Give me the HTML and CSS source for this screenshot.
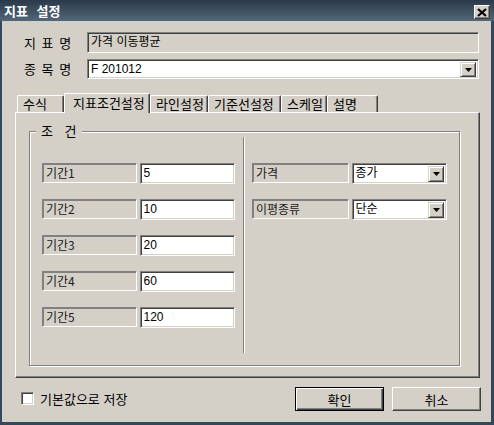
FILE: index.html
```html
<!DOCTYPE html>
<html lang="ko">
<head>
    <meta charset="UTF-8">
    <title>지표 설정</title>
    <link rel="stylesheet" href="styles.css">
</head>
<body>
    <div class="window">
        <div class="titlebar">
            <span class="title">지표 설정</span>
            <span class="close-btn">
                <svg width="10" height="9" viewBox="0 0 10 9">
                    <path d="M1 1 L9 8 M9 1 L1 8" stroke="#000" stroke-width="2.2" fill="none"/>
                </svg>
            </span>
        </div>

        <div class="client">
            <div class="field-row first">
                <span class="field-label">지 표 명</span>
                <div class="textbox readonly">가격 이동평균</div>
            </div>
            <div class="field-row second">
                <span class="field-label">종 목 명</span>
                <div class="combo">
                    <span class="combo-text">F 201012</span>
                    <span class="drop-btn"><svg width="7" height="4" viewBox="0 0 7 4"><polygon points="0,0 7,0 3.5,4" fill="#000"/></svg></span>
                </div>
            </div>

            <div class="tabs">
                <div class="tab t1">수식</div>
                <div class="tab t2 active">지표조건설정</div>
                <div class="tab t3">라인설정</div>
                <div class="tab t4">기준선설정</div>
                <div class="tab t5">스케일</div>
                <div class="tab t6">설명</div>
            </div>

            <div class="tab-panel">
                <div class="group">
                    <div class="group-title">조 건</div>
                    <div class="group-body">
                        <div class="col col-left">
                            <div class="cond-row">
                                <div class="static">기간1</div>
                                <div class="textbox">5</div>
                            </div>
                            <div class="cond-row">
                                <div class="static">기간2</div>
                                <div class="textbox">10</div>
                            </div>
                            <div class="cond-row">
                                <div class="static">기간3</div>
                                <div class="textbox">20</div>
                            </div>
                            <div class="cond-row">
                                <div class="static">기간4</div>
                                <div class="textbox">60</div>
                            </div>
                            <div class="cond-row">
                                <div class="static">기간5</div>
                                <div class="textbox">120</div>
                            </div>
                        </div>
                        <div class="vsep"></div>
                        <div class="col col-right">
                            <div class="cond-row">
                                <div class="static">가격</div>
                                <div class="combo small">
                                    <span class="combo-text">종가</span>
                                    <span class="drop-btn"><svg width="7" height="4" viewBox="0 0 7 4"><polygon points="0,0 7,0 3.5,4" fill="#000"/></svg></span>
                                </div>
                            </div>
                            <div class="cond-row">
                                <div class="static">이평종류</div>
                                <div class="combo small">
                                    <span class="combo-text">단순</span>
                                    <span class="drop-btn"><svg width="7" height="4" viewBox="0 0 7 4"><polygon points="0,0 7,0 3.5,4" fill="#000"/></svg></span>
                                </div>
                            </div>
                        </div>
                    </div>
                </div>
            </div>

            <div class="footer">
                <label class="check">
                    <span class="checkbox"></span>
                    <span>기본값으로 저장</span>
                </label>
                <div class="buttons">
                    <button class="btn default">확인</button>
                    <button class="btn">취소</button>
                </div>
            </div>
        </div>
    </div>
</body>
</html>
```

FILE: styles.css
```css
* { box-sizing: border-box; }
body {
    margin: 0;
    font-family: "Liberation Sans", "Noto Sans CJK KR", sans-serif;
    font-size: 12px;
    color: #000;
    background: #d4d0c8;
}
.window {
    width: 494px;
    height: 425px;
    display: flex;
    flex-direction: column;
    background: #d4d0c8;
}
.titlebar {
    height: 21px;
    display: flex;
    justify-content: space-between;
    align-items: flex-start;
    padding: 0 4px 0 4px;
    background: linear-gradient(#2a3949, #526779);
}
.title {
    color: #fff;
    font-family: "Noto Sans CJK KR", sans-serif;
    font-weight: bold;
    font-size: 13px;
    line-height: 21px;
    word-spacing: 5px;
}
.close-btn {
    width: 16px;
    height: 14px;
    margin-top: 5px;
    display: flex;
    align-items: center;
    justify-content: center;
    background: #d4d0c8;
    border-top: 1px solid #fff;
    border-left: 1px solid #fff;
    border-right: 1px solid #404040;
    border-bottom: 1px solid #404040;
    box-shadow: inset -1px -1px #808080;
}
.client {
    flex: 1;
    border-left: 2px solid #34485c;
    border-right: 3px solid #34485c;
    border-bottom: 3px solid #34485c;
    padding-top: 11px;
}

/* top fields */
.field-row {
    display: flex;
    align-items: center;
    margin: 0 12px 0 20px;
}
.field-row.first { height: 21px; margin-bottom: 6px; }
.field-row.second { height: 20px; }
.field-label {
    width: 65px;
    font-family: "Noto Sans CJK KR", sans-serif;
    font-size: 13px;
    line-height: 16px;
    padding-left: 2px;
    word-spacing: 2px;
}
.field-row .textbox,
.field-row .combo {
    flex: 1;
    height: 100%;
}

.textbox {
    height: 21px;
    background: #fff;
    border-top: 1px solid #808080;
    border-left: 1px solid #808080;
    border-right: 1px solid #fff;
    border-bottom: 1px solid #fff;
    box-shadow: inset 1px 1px #404040, inset -1px -1px #d4d0c8;
    padding: 2px 3px 0;
    line-height: 15px;
    white-space: nowrap;
}
.textbox.readonly { background: #d4d0c8; }

.combo {
    display: flex;
    align-items: stretch;
    background: #fff;
    border-top: 1px solid #808080;
    border-left: 1px solid #808080;
    border-right: 1px solid #fff;
    border-bottom: 1px solid #fff;
    box-shadow: inset 1px 1px #404040, inset -1px -1px #d4d0c8;
    padding: 2px 2px 1px 2px;
}
.combo-text {
    flex: 1;
    padding-left: 1px;
    line-height: 15px;
}
.drop-btn {
    width: 16px;
    display: flex;
    align-items: center;
    justify-content: center;
    background: #d4d0c8;
    border-top: 1px solid #d4d0c8;
    border-left: 1px solid #d4d0c8;
    border-right: 1px solid #404040;
    border-bottom: 1px solid #404040;
    box-shadow: inset 1px 1px #fff, inset -1px -1px #808080;
}

/* tabs */
.tabs {
    height: 19px;
    margin: 14px 0 0 15px;
    display: flex;
    align-items: flex-end;
}
.tab {
    height: 17px;
    padding-left: 5px;
    line-height: 15px;
    font-family: "Noto Sans CJK KR", sans-serif;
    font-size: 13px;
    border-top: 1px solid #fff;
    border-left: 1px solid #fff;
    border-right: 1px solid #404040;
    box-shadow: inset -1px 0 #808080;
    border-radius: 2px 2px 0 0;
    white-space: nowrap;
}
.tab.active {
    height: 20px;
    margin-bottom: -1px;
    padding-left: 8px;
    padding-top: 1px;
    background: #d4d0c8;
    position: relative;
    z-index: 1;
}
.t1 { width: 47px; }
.t2 { width: 86px; }
.t3 { width: 58px; }
.t4 { width: 73px; }
.t5 { width: 46px; }
.t6 { width: 51px; }

.tab-panel {
    width: 465px;
    height: 266px;
    margin-left: 13px;
    border-top: 1px solid #fff;
    border-left: 1px solid #fff;
    border-right: 1px solid #404040;
    border-bottom: 1px solid #404040;
    box-shadow: inset -1px -1px #808080;
    padding: 18px 0 0 13px;
}

/* group box */
.group {
    width: 431px;
    height: 235px;
    display: flex;
    flex-direction: column;
    border: 1px solid #808080;
    box-shadow: inset 1px 1px #fff, 1px 1px #fff;
}
.group-title {
    align-self: flex-start;
    margin: -8px 0 -6px 6px;
    padding: 0 5px;
    height: 14px;
    line-height: 14px;
    background: #d4d0c8;
    font-family: "Noto Sans CJK KR", sans-serif;
    font-size: 13px;
    word-spacing: 8px;
}
.group-body {
    flex: 1;
    display: flex;
}
.col {
    display: flex;
    flex-direction: column;
    gap: 15px;
    padding-top: 31px;
}
.col-left { width: 193px; margin-left: 12px; }
.col-right { width: 195px; margin-left: 7px; }
.vsep {
    width: 2px;
    margin: 5px 0 12px 8px;
    border-left: 1px solid #808080;
    border-right: 1px solid #fff;
}
.cond-row {
    display: flex;
    gap: 3px;
    height: 21px;
}
.cond-row > * { flex: 1; height: 21px; }
.static {
    height: 20px !important;
    border-top: 1px solid #808080;
    border-left: 1px solid #808080;
    border-right: 1px solid #fff;
    border-bottom: 1px solid #fff;
    box-shadow: inset 1px 1px #808080;
    padding: 1px 2px 0 3px;
    line-height: 15px;
    font-family: "Noto Sans CJK KR", sans-serif;
    font-size: 12px;
    color: #202020;
}
.cond-row .textbox { font-size: 12px; }

/* footer */
.footer {
    display: flex;
    align-items: center;
    justify-content: space-between;
    margin-top: 9px;
    padding: 0 10px 0 19px;
}
.check {
    display: flex;
    align-items: center;
    gap: 6px;
    font-family: "Noto Sans CJK KR", sans-serif;
    font-size: 13px;
    margin-top: -2px;
}
.checkbox {
    width: 13px;
    height: 13px;
    background: #fff;
    border-top: 1px solid #808080;
    border-left: 1px solid #808080;
    border-right: 1px solid #fff;
    border-bottom: 1px solid #fff;
    box-shadow: inset 1px 1px #404040, inset -1px -1px #d4d0c8;
}
.buttons {
    display: flex;
    gap: 8px;
}
.btn {
    width: 89px;
    height: 24px;
    padding: 0;
    background: #d4d0c8;
    font-family: "Noto Sans CJK KR", sans-serif;
    font-size: 13px;
    color: #000;
    border-top: 1px solid #fff;
    border-left: 1px solid #fff;
    border-right: 1px solid #404040;
    border-bottom: 1px solid #404040;
    box-shadow: inset -1px -1px #808080;
}
.btn.default {
    border: 1px solid #000;
    box-shadow: inset 1px 1px #fff, inset -1px -1px #404040, inset -2px -2px #808080;
}
```
